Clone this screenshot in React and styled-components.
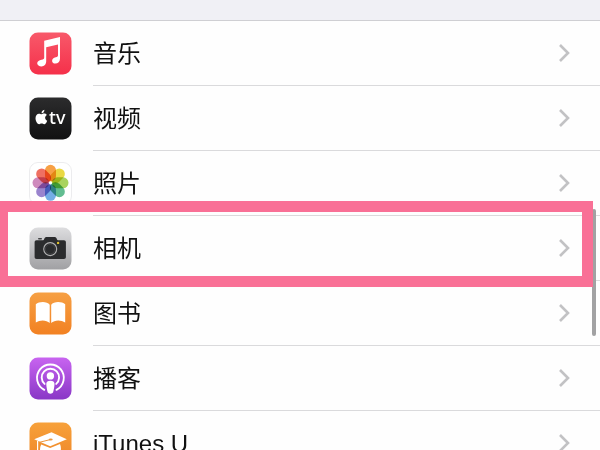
import React from "react";
import styled, { createGlobalStyle } from "styled-components";

const GlobalStyle = createGlobalStyle`
  *, *::before, *::after { box-sizing: border-box; }
  body {
    margin: 0;
    background: #fff;
    color: #111;
    font-family: "Liberation Sans", "Noto Sans CJK SC", sans-serif;
  }
`;

const Page = styled.main`
  position: relative;
  height: 100vh;
  overflow: hidden;
  background: #fefefe;
`;

const SectionGap = styled.div`
  height: 21px;
  background: #f0f0f5;
  border-bottom: 1px solid #cfcfd3;
`;

const List = styled.ul`
  margin: 0;
  padding: 0;
  list-style: none;
`;

const Item = styled.li`
  position: relative;
`;

const RowLink = styled.a`
  display: flex;
  height: 65px;
  padding-left: 29px;
  gap: 21px;
  color: inherit;
  text-decoration: none;
`;

const AppIcon = styled.svg`
  flex: none;
  width: 43px;
  height: 43px;
  margin-top: 11px;
`;

const RowBody = styled.span`
  flex: 1;
  display: flex;
  align-items: center;
  justify-content: space-between;
  padding-right: 30px;
  border-bottom: 1px solid #dadadc;
`;

const Label = styled.span`
  padding-top: 2px;
  font-size: 24px;
  line-height: 36px;
  white-space: nowrap;
`;

const Chevron = styled.svg`
  width: 12px;
  height: 20px;
  fill: none;
  stroke: #c2c2c4;
  stroke-width: 2.6;
`;

const Highlight = styled.div`
  position: absolute;
  z-index: 2;
  inset: -15px 7px -6px 0;
  border: solid #f97096;
  border-width: 11px 11px 11px 8px;
  pointer-events: none;
`;

const ScrollThumb = styled.div`
  position: absolute;
  z-index: 1;
  top: 209px;
  right: 4px;
  width: 4px;
  height: 127px;
  border-radius: 2px;
  background: #a2a2a3;
`;

function IconFrame({ id, top, bottom, stroke = "none", children }) {
  return (
    <AppIcon viewBox="0 0 43 43" aria-hidden="true">
      <defs>
        <linearGradient id={id} x1="0" y1="0" x2="0" y2="1">
          <stop offset="0" stopColor={top} />
          <stop offset="1" stopColor={bottom} />
        </linearGradient>
      </defs>
      <rect x="0.5" y="0.5" width="42" height="42" rx="8.5" fill={`url(#${id})`} stroke={stroke} />
      {children}
    </AppIcon>
  );
}

function MusicIcon() {
  return (
    <IconFrame id="music" top="#f8596a" bottom="#f5304a">
      <path
        fill="#fff"
        d="M15.2 8.8 31 5V26.8C31 29.8 29 31.6 26.3 31.6 24.3 31.6 23.1 30.3 23.1 28.7 23.1 26.7 24.6 25.6 26.7 25.2 28.5 24.8 29 24.4 29 23V12.4L17.2 15.3V29.3C17.2 32.4 15.2 34.4 12.5 34.4 10.2 34.4 8.2 33.2 8.2 31.2 8.2 29.3 10.3 28.2 12.5 27.7 14.6 27.2 15.2 26.8 15.2 25.4Z"
      />
    </IconFrame>
  );
}

const TvText = styled.text`
  font-family: "Noto Sans", sans-serif;
  font-size: 18px;
  font-weight: 500;
  fill: #fff;
`;

function TvIcon() {
  return (
    <IconFrame id="tv" top="#2c2c2d" bottom="#111112">
      <g fill="#fff">
        <path d="M12.6 16.3C12.3 14.5 13.7 13 15.4 12.7 15.5 14.6 14.3 16 12.6 16.3Z" />
        <path d="M12.5 17.3C13.3 17.3 14 16.6 15.1 16.6 16.2 16.6 17.2 17.1 17.8 18 15.3 19.5 15.8 22.7 18.2 23.7 17.5 25.7 16.4 27.2 15.2 27.2 14.2 27.2 13.8 26.6 12.7 26.6 11.5 26.6 11.1 27.2 10.2 27.2 8.3 27.2 6.5 23.9 6.5 21.2 6.5 18.5 8.1 16.7 10 16.7 11.1 16.7 11.8 17.3 12.5 17.3Z" />
      </g>
      <TvText x="20" y="27">tv</TvText>
    </IconFrame>
  );
}

const petals = ["#f7a045", "#ead943", "#a9d35f", "#62bd91", "#74ade6", "#9a84ce", "#cf8bbd", "#ef7062"];

const PetalShape = styled.rect`
  mix-blend-mode: multiply;
`;

function PhotosIcon() {
  return (
    <IconFrame id="photos" top="#ffffff" bottom="#ffffff" stroke="#ececee">
      {petals.map((color, index) => (
        <PetalShape
          key={color}
          x="16"
          y="2.8"
          width="11"
          height="16.6"
          rx="5.5"
          fill={color}
          transform={`rotate(${index * 45} 21.5 20.8)`}
        />
      ))}
      <circle cx="21.5" cy="20.8" r="1.3" fill="#fff" />
    </IconFrame>
  );
}

function CameraIcon() {
  return (
    <IconFrame id="camera" top="#dddddf" bottom="#a0a0a3">
      <path
        fill="#2b2c2e"
        d="M7.6 13.2H14.2C15.3 13.2 15.4 10 17.2 10H25.9C27.7 10 27.8 13.2 28.9 13.2H34.9C36.2 13.2 36.9 13.9 36.9 15.2V30C36.9 31.3 36.2 32 34.9 32H7.6C6.3 32 5.6 31.3 5.6 30V15.2C5.6 13.9 6.3 13.2 7.6 13.2Z"
      />
      <rect x="9" y="10.9" width="4" height="1.7" rx="0.8" fill="#424345" />
      <circle cx="21.2" cy="22.1" r="6.5" fill="#292a2c" stroke="#b1b1b2" strokeWidth="1.1" />
      <circle cx="21.2" cy="22.1" r="4.8" fill="none" stroke="#47484a" strokeWidth="0.7" />
      <circle cx="29.1" cy="15.9" r="1.2" fill="#dfc22e" />
    </IconFrame>
  );
}

function BooksIcon() {
  return (
    <IconFrame id="books" top="#f6a044" bottom="#f28122">
      <path
        fill="#fff"
        d="M20.7 12.7C18.2 9.2 10.1 9.2 6.8 12.3V30.6C11 27.7 17.5 27.9 20.7 31.1ZM22.2 12.7C24.7 9.2 32.9 9.2 36.2 12.3V30.6C32 27.7 25.4 27.9 22.2 31.1Z"
      />
    </IconFrame>
  );
}

function PodcastsIcon() {
  return (
    <IconFrame id="podcasts" top="#c864f0" bottom="#8937c6">
      <g fill="none" stroke="#fff" strokeWidth="1.9" strokeLinecap="round">
        <path d="M15.3 32.8A13.4 13.4 0 1 1 27.5 32.8" />
        <path d="M15.6 26.9A8.7 8.7 0 1 1 27.2 26.9" />
      </g>
      <circle cx="21.4" cy="18.9" r="3.7" fill="#fff" />
      <path
        fill="#fff"
        d="M21.4 23.8C24 23.8 25.5 24.8 25.5 26.9 25.5 29 24.7 33.2 24.1 35.3 23.6 37.2 19.2 37.2 18.7 35.3 18.1 33.2 17.3 29 17.3 26.9 17.3 24.8 18.8 23.8 21.4 23.8Z"
      />
    </IconFrame>
  );
}

function ITunesUIcon() {
  return (
    <IconFrame id="itunesu" top="#f7a13a" bottom="#ee8427">
      <path fill="#fff" d="M5.2 17.2 22.5 10.3 37.8 17.2 21.2 24.2Z" />
      <path fill="#fff" d="M12.2 22.4 21.2 26 31 22C32.4 25 32.2 29 30.5 33L21.3 39 13 33C10.7 30 10.4 25.5 12.2 22.4Z" />
      <path d="M21.7 17.5 10 20.4" fill="none" stroke="#ed963c" strokeWidth="1" />
      <path d="M8.6 19V29" stroke="#fff" strokeWidth="1.2" />
      <ellipse cx="21.7" cy="17.4" rx="2" ry="1" fill="#ed963c" />
    </IconFrame>
  );
}

const entries = [
  { id: "music", label: "音乐", Icon: MusicIcon },
  { id: "videos", label: "视频", Icon: TvIcon },
  { id: "photos", label: "照片", Icon: PhotosIcon },
  { id: "camera", label: "相机", Icon: CameraIcon, highlighted: true },
  { id: "books", label: "图书", Icon: BooksIcon },
  { id: "podcasts", label: "播客", Icon: PodcastsIcon },
  { id: "itunes-u", label: "iTunes U", Icon: ITunesUIcon },
];

export default function App() {
  return (
    <Page lang="zh-CN">
      <GlobalStyle />
      <SectionGap />
      <List>
        {entries.map(({ id, label, Icon, highlighted }) => (
          <Item key={id}>
            <RowLink href={`#${id}`}>
              <Icon />
              <RowBody>
                <Label>{label}</Label>
                <Chevron viewBox="0 0 12 20" aria-hidden="true">
                  <path d="M2 2 10 10 2 18" />
                </Chevron>
              </RowBody>
            </RowLink>
            {highlighted && <Highlight />}
          </Item>
        ))}
      </List>
      <ScrollThumb />
    </Page>
  );
}
